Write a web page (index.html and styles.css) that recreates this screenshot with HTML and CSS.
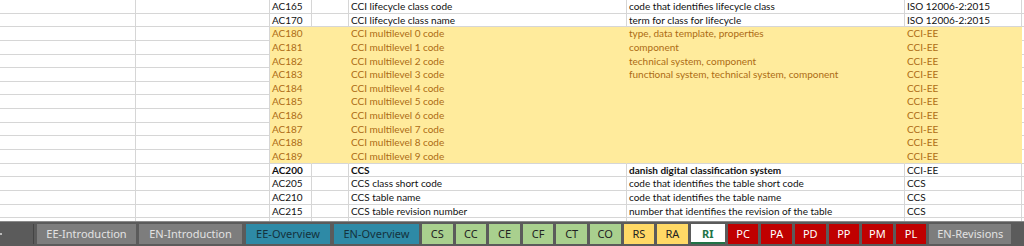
FILE: index.html
```html
<!DOCTYPE html>
<html lang="en">

<head>
  <meta charset="UTF-8">
  <meta name="viewport" content="width=device-width, initial-scale=1.0">
  <title>Sheet RI</title>
  <link rel="stylesheet" href="styles.css">
</head>

<body>

  <div id="sheet">
    <div class="row">
      <div class="cell"></div><div class="cell"></div>
      <div class="cell">AC165</div><div class="cell"></div>
      <div class="cell">CCI lifecycle class code</div>
      <div class="cell">code that identifies lifecycle class</div>
      <div class="cell">ISO 12006-2:2015</div><div class="cell"></div>
    </div>
    <div class="row">
      <div class="cell"></div><div class="cell"></div>
      <div class="cell">AC170</div><div class="cell"></div>
      <div class="cell">CCI lifecycle class name</div>
      <div class="cell">term for class for lifecycle</div>
      <div class="cell">ISO 12006-2:2015</div><div class="cell"></div>
    </div>
    <div class="row neutral">
      <div class="cell"></div><div class="cell"></div>
      <div class="cell">AC180</div><div class="cell"></div>
      <div class="cell">CCI multilevel 0 code</div>
      <div class="cell">type, data template, properties</div>
      <div class="cell">CCI-EE</div><div class="cell"></div>
    </div>
    <div class="row neutral">
      <div class="cell"></div><div class="cell"></div>
      <div class="cell">AC181</div><div class="cell"></div>
      <div class="cell">CCI multilevel 1 code</div>
      <div class="cell">component</div>
      <div class="cell">CCI-EE</div><div class="cell"></div>
    </div>
    <div class="row neutral">
      <div class="cell"></div><div class="cell"></div>
      <div class="cell">AC182</div><div class="cell"></div>
      <div class="cell">CCI multilevel 2 code</div>
      <div class="cell">technical system, component</div>
      <div class="cell">CCI-EE</div><div class="cell"></div>
    </div>
    <div class="row neutral">
      <div class="cell"></div><div class="cell"></div>
      <div class="cell">AC183</div><div class="cell"></div>
      <div class="cell">CCI multilevel 3 code</div>
      <div class="cell">functional system, technical system, component</div>
      <div class="cell">CCI-EE</div><div class="cell"></div>
    </div>
    <div class="row neutral">
      <div class="cell"></div><div class="cell"></div>
      <div class="cell">AC184</div><div class="cell"></div>
      <div class="cell">CCI multilevel 4 code</div>
      <div class="cell"></div>
      <div class="cell">CCI-EE</div><div class="cell"></div>
    </div>
    <div class="row neutral">
      <div class="cell"></div><div class="cell"></div>
      <div class="cell">AC185</div><div class="cell"></div>
      <div class="cell">CCI multilevel 5 code</div>
      <div class="cell"></div>
      <div class="cell">CCI-EE</div><div class="cell"></div>
    </div>
    <div class="row neutral">
      <div class="cell"></div><div class="cell"></div>
      <div class="cell">AC186</div><div class="cell"></div>
      <div class="cell">CCI multilevel 6 code</div>
      <div class="cell"></div>
      <div class="cell">CCI-EE</div><div class="cell"></div>
    </div>
    <div class="row neutral">
      <div class="cell"></div><div class="cell"></div>
      <div class="cell">AC187</div><div class="cell"></div>
      <div class="cell">CCI multilevel 7 code</div>
      <div class="cell"></div>
      <div class="cell">CCI-EE</div><div class="cell"></div>
    </div>
    <div class="row neutral">
      <div class="cell"></div><div class="cell"></div>
      <div class="cell">AC188</div><div class="cell"></div>
      <div class="cell">CCI multilevel 8 code</div>
      <div class="cell"></div>
      <div class="cell">CCI-EE</div><div class="cell"></div>
    </div>
    <div class="row neutral last">
      <div class="cell"></div><div class="cell"></div>
      <div class="cell">AC189</div><div class="cell"></div>
      <div class="cell">CCI multilevel 9 code</div>
      <div class="cell"></div>
      <div class="cell">CCI-EE</div><div class="cell"></div>
    </div>
    <div class="row heading">
      <div class="cell"></div><div class="cell"></div>
      <div class="cell">AC200</div><div class="cell"></div>
      <div class="cell">CCS</div>
      <div class="cell">danish digital classification system</div>
      <div class="cell plain">CCI-EE</div><div class="cell"></div>
    </div>
    <div class="row">
      <div class="cell"></div><div class="cell"></div>
      <div class="cell">AC205</div><div class="cell"></div>
      <div class="cell">CCS class short code</div>
      <div class="cell">code that identifies the table short code</div>
      <div class="cell">CCS</div><div class="cell"></div>
    </div>
    <div class="row">
      <div class="cell"></div><div class="cell"></div>
      <div class="cell">AC210</div><div class="cell"></div>
      <div class="cell">CCS table name</div>
      <div class="cell">code that identifies the table name</div>
      <div class="cell">CCS</div><div class="cell"></div>
    </div>
    <div class="row">
      <div class="cell"></div><div class="cell"></div>
      <div class="cell">AC215</div><div class="cell"></div>
      <div class="cell">CCS table revision number</div>
      <div class="cell">number that identifies the revision of the table</div>
      <div class="cell">CCS</div><div class="cell"></div>
    </div>
    <div class="row">
      <div class="cell"></div><div class="cell"></div>
      <div class="cell"></div><div class="cell"></div>
      <div class="cell"></div><div class="cell"></div>
      <div class="cell"></div><div class="cell"></div>
    </div>
  </div>

  <div id="tabs">
    <div class="nav"><span class="dot"></span></div>
    <div class="tab gray intro">EE-Introduction</div>
    <div class="tab gray intro en">EN-Introduction</div>
    <div class="tab teal">EE-Overview</div>
    <div class="tab teal en">EN-Overview</div>
    <div class="tab green">CS</div>
    <div class="tab green">CC</div>
    <div class="tab green">CE</div>
    <div class="tab green">CF</div>
    <div class="tab green">CT</div>
    <div class="tab green">CO</div>
    <div class="tab yellow">RS</div>
    <div class="tab yellow">RA</div>
    <div class="tab active">RI</div>
    <div class="tab red">PC</div>
    <div class="tab red">PA</div>
    <div class="tab red">PD</div>
    <div class="tab red">PP</div>
    <div class="tab red">PM</div>
    <div class="tab red">PL</div>
    <div class="tab gray revisions">EN-Revisions</div>
  </div>

</body>

</html>
```

FILE: styles.css
```css
html,
body {
  margin: 0;
  height: 246px;
  overflow: hidden;
  background: #fff;
}

body {
  display: flex;
  flex-direction: column;
  font-family: Lato, "Liberation Sans", sans-serif;
}

#sheet {
  height: 221px;
  overflow: hidden;
}

.row {
  display: grid;
  grid-template-columns: 136px 134px 42px 37px 278px 278px 117px 1fr;
  height: 13.65px;
}

.cell {
  box-sizing: border-box;
  border-right: 1px solid #d6d6d6;
  border-bottom: 1px solid #d6d6d6;
  padding-left: 2px;
  font-size: 10px;
  line-height: 12.65px;
  color: #111;
  white-space: nowrap;
  overflow: hidden;
}

.neutral .cell:nth-child(n+3):nth-child(-n+7) {
  background: #ffeb9c;
  border-color: #ffeb9c;
  color: #ad6c14;
}

.neutral.last .cell:nth-child(n+3):nth-child(-n+7) {
  border-bottom-color: #d6d6d6;
}

.heading .cell {
  font-weight: bold;
}

.heading .cell.plain {
  font-weight: normal;
}

#tabs {
  flex: 1;
  display: flex;
  align-items: flex-start;
  gap: 3px;
  padding-top: 2px;
  background: #5b5b5b;
  border-top: 1px solid #8a8a8a;
  font-family: "Noto Sans", "Open Sans", sans-serif;
  font-size: 11px;
}

.nav {
  box-sizing: border-box;
  width: 34px;
  height: 20px;
  border-right: 1px solid #444;
  padding-top: 9px;
}

.dot {
  display: block;
  width: 2px;
  height: 2px;
  background: #bbb;
}

.tab {
  flex: none;
  box-sizing: border-box;
  width: 30.6px;
  height: 20px;
  line-height: 20px;
  text-align: center;
  white-space: nowrap;
  color: #222;
}

.tab.intro {
  width: 99px;
}

.tab.intro.en {
  width: 103px;
}

.tab.teal {
  width: 84px;
  margin-left: 1px;
}

.tab.teal.en {
  width: 85px;
}

.tab.revisions {
  width: 82px;
}

.gray {
  background: #7d7d7d;
  color: #e2e2e2;
}

.teal {
  background: #2e8aa6;
  color: #14323d;
}

.green {
  background: #a9d08e;
}

.yellow {
  background: #ffd966;
}

.red {
  background: #c00000;
  color: #fff;
}

.tab.active {
  width: 34px;
  background: #fff;
  color: #217346;
  font-weight: bold;
  border-bottom: 2px solid #217346;
  line-height: 19px;
}
```
